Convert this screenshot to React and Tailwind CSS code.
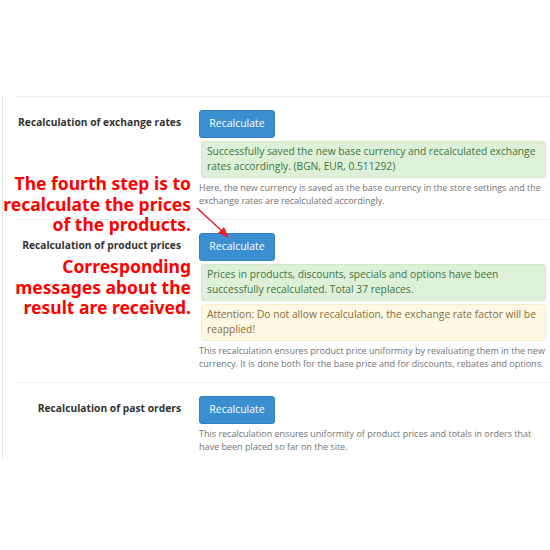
import { useState } from 'react'

const rows = [
  {
    label: 'Recalculation of exchange rates',
    alerts: [
      {
        type: 'success',
        text: 'Successfully saved the new base currency and recalculated exchange rates accordingly. (BGN, EUR, 0.511292)',
      },
    ],
    help: 'Here, the new currency is saved as the base currency in the store settings and the exchange rates are recalculated accordingly.',
  },
  {
    label: 'Recalculation of product prices',
    alerts: [
      {
        type: 'success',
        text: 'Prices in products, discounts, specials and options have been successfully recalculated. Total 37 replaces.',
      },
      {
        type: 'warning',
        text: 'Attention: Do not allow recalculation, the exchange rate factor will be reapplied!',
      },
    ],
    help: 'This recalculation ensures product price uniformity by revaluating them in the new currency. It is done both for the base price and for discounts, rebates and options.',
  },
  {
    label: 'Recalculation of past orders',
    alerts: [],
    help: 'This recalculation ensures uniformity of product prices and totals in orders that have been placed so far on the site.',
  },
]

const Alert = ({ type, text }) => {
  const styles =
    type === 'success'
      ? 'bg-[#dff0d8] border-[#d6e9c6] text-[#3c763d]'
      : 'bg-[#fcf8e3] border-[#faebcc] text-[#8a6d3b]'
  return (
    <div className={`mt-[3px] ml-[2px] border rounded-[3px] px-[5px] py-[2px] text-[10.25px] leading-[15.5px] ${styles}`}>
      {text}
    </div>
  )
}

const Row = ({ row, last }) => {
  const [busy, setBusy] = useState(false)
  return (
    <div className={`flex border-t border-[#eeeeee] pt-[12px] ${last ? 'pb-[5px]' : 'pb-[12px]'}`}>
      <div className="w-[184px] shrink-0 h-[28px] flex items-center justify-end pr-[18px] text-[10.25px] font-bold text-[#333333]">
        {row.label}
      </div>
      <div className="flex-1 pr-[4px]">
        <button
          onClick={() => setBusy(!busy)}
          className="h-[28px] w-[76px] rounded-[3px] bg-[#3a8fd0] border border-[#2f7ebd] text-white text-[10.5px]"
        >
          Recalculate
        </button>
        {row.alerts.map((a, i) => (
          <Alert key={i} {...a} />
        ))}
        <p className="mt-[3px] text-[9px] leading-[13px] text-[#737373]">{row.help}</p>
      </div>
    </div>
  )
}

export default function App() {
  return (
    <div className="relative w-[550px] h-[550px] bg-white overflow-hidden" style={{ fontFamily: '"Open Sans", sans-serif' }}>
      <div className="pt-[96px]">
        <div className="ml-[2px] border-l border-[#e3e3e3] pl-[12px]">
          {rows.map((row, i) => (
            <Row key={i} row={row} last={i === rows.length - 1} />
          ))}
        </div>
      </div>

      {/* annotation overlay */}
      <div
        className="absolute right-[359px] top-[173px] text-right text-[17.5px] leading-[20.5px] font-bold text-[#ff0000] whitespace-nowrap"
        style={{ fontFamily: '"Noto Sans", sans-serif' }}
      >
        The fourth step is to
        <br />
        recalculate the prices
        <br />
        of the products.
      </div>
      <div
        className="absolute right-[359px] top-[256px] text-right text-[17.5px] leading-[20.5px] font-bold text-[#ff0000] whitespace-nowrap"
        style={{ fontFamily: '"Noto Sans", sans-serif' }}
      >
        Corresponding
        <br />
        messages about the
        <br />
        result are received.
      </div>
      <svg className="absolute left-0 top-0" width="550" height="550" viewBox="0 0 550 550">
        <line x1="197" y1="208" x2="224" y2="233" stroke="#e8212b" strokeWidth="1.6" />
        <polygon points="229,238 218,233 224,227" fill="#e8212b" />
      </svg>
    </div>
  )
}
